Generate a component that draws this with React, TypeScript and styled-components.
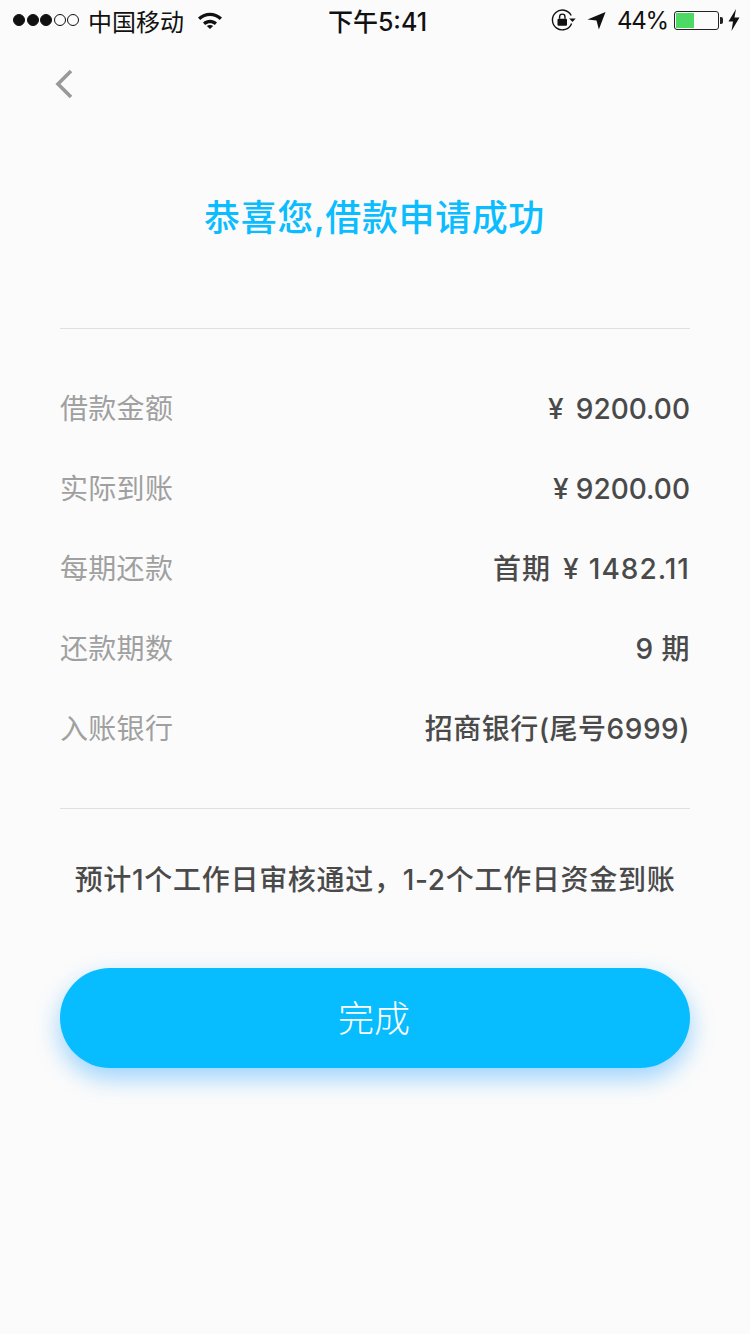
import React from "react";
import styled, { createGlobalStyle } from "styled-components";

const FONT = `"Inter", "Noto Sans CJK SC", "Liberation Sans", sans-serif`;

const GlobalStyle = createGlobalStyle`
  html, body {
    margin: 0;
    padding: 0;
    background: #fbfbfb;
    font-family: ${FONT};
  }
`;

const Page = styled.div`
  width: 750px;
  height: 1334px;
  overflow: hidden;
  background: #fbfbfb;
  display: flex;
  flex-direction: column;
`;

const StatusBar = styled.div`
  height: 40px;
  padding: 0 10px 0 13px;
  display: flex;
  align-items: center;
  justify-content: space-between;
  color: #111;
  font-size: 24px;
`;

const StatusSide = styled.div<{ $gap?: number; $end?: boolean }>`
  width: 260px;
  display: flex;
  align-items: center;
  gap: ${(p) => p.$gap ?? 8}px;
  justify-content: ${(p) => (p.$end ? "flex-end" : "flex-start")};
`;

const Carrier = styled.span`
  margin-left: 1px;
`;

const Clock = styled.div`
  font-size: 25px;
  font-weight: 500;
  margin-left: 2px;
`;

const Percent = styled.span`
  letter-spacing: -1.2px;
  margin: 0 -1px 0 -1px;
`;

const Dots = styled.div`
  display: flex;
  gap: 1.5px;
`;

const Dot = styled.span<{ $filled?: boolean }>`
  width: 12px;
  height: 12px;
  box-sizing: border-box;
  border-radius: 50%;
  border: 1px solid #111;
  background: ${(p) => (p.$filled ? "#111" : "transparent")};
`;

const Battery = styled.div`
  position: relative;
  width: 45px;
  height: 19px;
  box-sizing: border-box;
  border: 1px solid #222;
  border-radius: 3px;
  padding: 1px;
  margin-right: -1px;
  &::after {
    content: "";
    position: absolute;
    right: -5px;
    top: 5px;
    width: 3px;
    height: 7px;
    background: #222;
    border-radius: 0 2px 2px 0;
  }
`;

const BatteryFill = styled.div`
  height: 100%;
  background: #4cd964;
`;

const BackRow = styled.div`
  height: 88px;
  padding-left: 55px;
  display: flex;
  align-items: center;
`;

const Title = styled.h1`
  margin: 0 0 0 -1px;
  height: 160px;
  padding-top: 65px;
  box-sizing: border-box;
  line-height: 50px;
  text-align: center;
  font-size: 36px;
  font-weight: 500;
  letter-spacing: 0.6px;
  color: #0bbdff;
`;

const Section = styled.div`
  margin: 40px 60px 0;
  height: 481px;
  box-sizing: border-box;
  padding: 40px 0 0;
  border-top: 1px solid #e0e0e0;
  border-bottom: 1px solid #e0e0e0;
`;

const Row = styled.div`
  height: 80px;
  display: flex;
  align-items: center;
  justify-content: space-between;
  line-height: 40px;
`;

const Label = styled.span`
  font-size: 28px;
  letter-spacing: 0.3px;
  color: #a0a0a0;
`;

const Value = styled.span<{ $spacing: number }>`
  font-size: 28px;
  font-weight: 500;
  letter-spacing: ${(p) => p.$spacing}px;
  color: #4a4a4a;
  white-space: pre;
`;

const Note = styled.p`
  margin: 0;
  height: 140px;
  padding-top: 51px;
  box-sizing: border-box;
  line-height: 40px;
  text-align: center;
  font-size: 28px;
  font-weight: 500;
  letter-spacing: 0.7px;
  color: #4a4a4a;
`;

const DoneButton = styled.button`
  display: block;
  width: 630px;
  height: 100px;
  margin: 19px 60px 0;
  padding: 0 2px 4px 0;
  border: none;
  border-radius: 50px;
  background: #08bdff;
  color: #fff;
  font-family: ${FONT};
  font-size: 36px;
  font-weight: 300;
  box-shadow: 0 10px 24px rgba(8, 150, 255, 0.4);
`;

const rows = [
  { label: "借款金额", value: "¥\u2009\u2009\u200a9200.00", spacing: 0 },
  { label: "实际到账", value: "¥\u2009\u200a9200.00", spacing: 0 },
  { label: "每期还款", value: "首期 \u200a¥\u2009\u200a1482.11", spacing: 1 },
  { label: "还款期数", value: "9 期", spacing: 0.5 },
  { label: "入账银行", value: "招商银行(尾号6999)", spacing: 0.5 },
];

const App = () => {
  return (
    <Page>
      <GlobalStyle />
      <StatusBar>
        <StatusSide>
          <Dots>
            <Dot $filled />
            <Dot $filled />
            <Dot $filled />
            <Dot />
            <Dot />
          </Dots>
          <Carrier>中国移动</Carrier>
          <svg width="26" height="18" viewBox="0 0 26 18" style={{ marginLeft: 5 }}>
            <path d="M1 6.5C8 0 18 0 25 6.5L22.8 9C17 3.8 9 3.8 3.2 9Z" fill="#111" />
            <path d="M6 11.5C10.3 7.8 15.7 7.8 20 11.5L17.8 14C14.8 11.5 11.2 11.5 8.2 14Z" fill="#111" />
            <path d="M9.8 15C11.8 13.6 14.2 13.6 16.2 15L13 18Z" fill="#111" />
          </svg>
        </StatusSide>
        <Clock>下午5:41</Clock>
        <StatusSide $end $gap={7}>
          <svg width="25" height="22" viewBox="0 0 25 22" fill="none">
            <path d="M20.6 14.5A9.9 9.9 0 1 1 20.2 6.5" stroke="#111" strokeWidth="1.4" />
            <path d="M18.2 9.5h6.5l-3.2 3.5Z" fill="#111" />
            <rect x="6.5" y="9.8" width="9.5" height="7" rx="1" fill="#111" />
            <path d="M8.6 9.8V7.8a2.7 2.7 0 0 1 5.4 0v2" stroke="#111" strokeWidth="1.4" />
          </svg>
          <svg width="19" height="19" viewBox="0 0 20 20" style={{ margin: "0 5px 0 4px" }}>
            <path d="M19.5 1 12.5 19.5 10 10 0.5 9Z" fill="#111" />
          </svg>
          <Percent>44%</Percent>
          <Battery>
            <BatteryFill style={{ width: "44%" }} />
          </Battery>
          <svg width="12" height="22" viewBox="0 0 12 22" style={{ marginLeft: 3 }}>
            <path d="M8 0 0.5 12.5H5L3.5 22 11.5 8.5H6.5Z" fill="#111" />
          </svg>
        </StatusSide>
      </StatusBar>
      <BackRow>
        <svg width="18" height="30" viewBox="0 0 18 30" fill="none">
          <path d="M16 2 3 15l13 13" stroke="#999" strokeWidth="3.6" />
        </svg>
      </BackRow>
      <Title>恭喜您,借款申请成功</Title>
      <Section>
        {rows.map((row) => (
          <Row key={row.label}>
            <Label>{row.label}</Label>
            <Value $spacing={row.spacing}>{row.value}</Value>
          </Row>
        ))}
      </Section>
      <Note>预计1个工作日审核通过，1-2个工作日资金到账</Note>
      <DoneButton>完成</DoneButton>
    </Page>
  );
};

export default App;
